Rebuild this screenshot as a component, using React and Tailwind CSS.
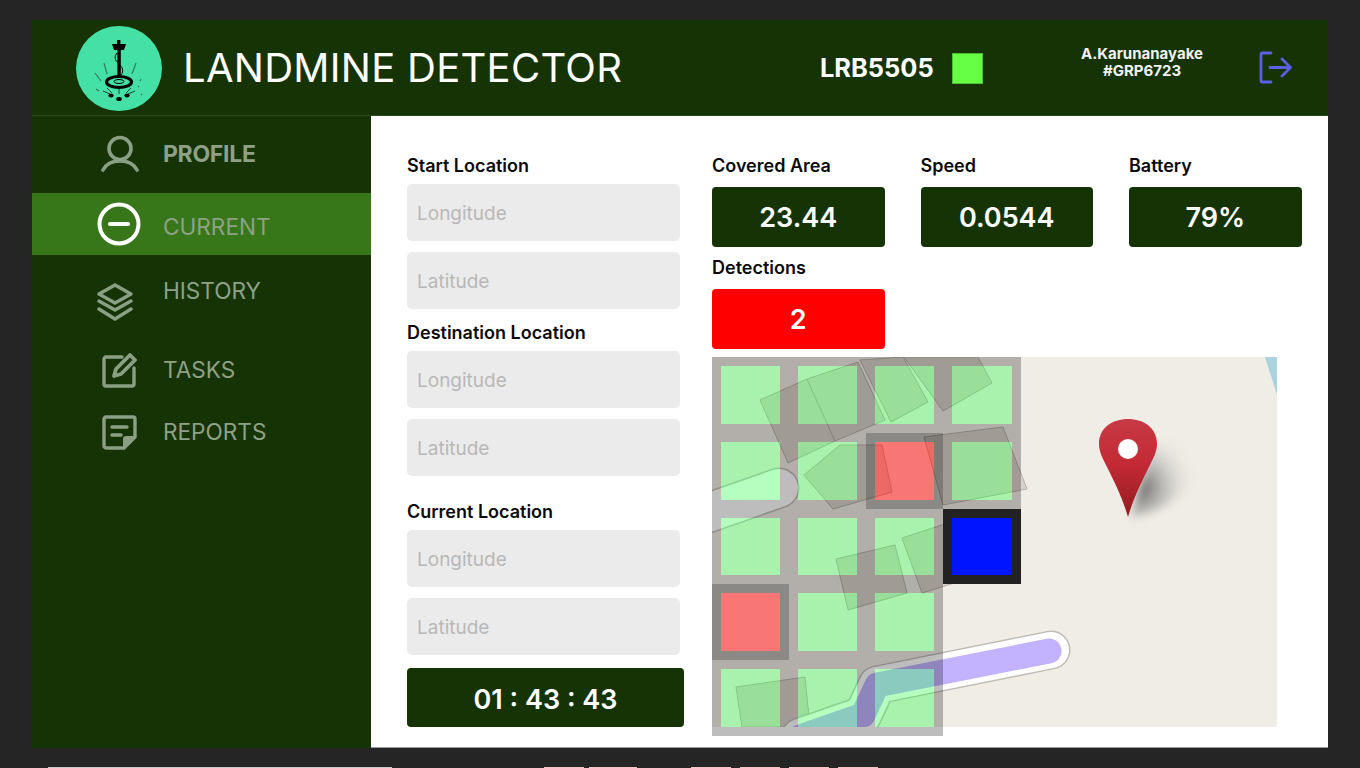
const font = { fontFamily: "Inter, 'Liberation Sans', sans-serif" };

function Logo() {
  return (
    <div className="w-[86px] h-[85px] rounded-full bg-[#44e0a6] shrink-0 mt-[1px]">
      <svg viewBox="0 0 86 85" className="w-full h-full">
        <path d="M36 18h5v-4h3.4v4H50l-2 6h-3.2v28h-3.4V24H38z" fill="#000" />
        <path d="M41 27c-4 5-1 8 3 12 3 3 4 8 0 11" fill="none" stroke="#000" strokeWidth="1" />
        <ellipse cx="43" cy="56" rx="12.5" ry="5.5" fill="none" stroke="#000" strokeWidth="3.2" />
        <ellipse cx="43" cy="55.5" rx="5" ry="2" fill="none" stroke="#000" strokeWidth="1" />
        <path d="M28 37l3 11M19 47l6 8M20 63l3 2M60 37l-4 11M65 53l-1 2M63 60l-1 1M66 68l-1 1" stroke="#2a5a46" strokeWidth="1.2" opacity=".75" />
        <path d="M27 65l7 3M31 62l5 5M55 62l-5 5M59 65l-7 3M43 63v5" stroke="#111" strokeWidth="1" opacity=".75" />
        <ellipse cx="35" cy="69.5" rx="2.6" ry="2" fill="#000" />
        <ellipse cx="51" cy="69.5" rx="2.6" ry="2" fill="#000" />
        <ellipse cx="43" cy="73" rx="2.8" ry="2" fill="#000" />
      </svg>
    </div>
  );
}

function NavIcon({ name }) {
  const common = { fill: "none", stroke: "#8b9f85", strokeWidth: 3.4, strokeLinecap: "round", strokeLinejoin: "round" };
  if (name === "profile")
    return (
      <svg width="38" height="38" viewBox="0 0 38 38" {...common} strokeWidth="3.6">
        <circle cx="19" cy="13.5" r="11" />
        <path d="M2 35c3-6 9-9 17-9s14 3 17 9" />
      </svg>
    );
  if (name === "current")
    return (
      <svg width="44" height="44" viewBox="0 0 44 44" fill="none" stroke="#fff" strokeLinecap="round">
        <circle cx="22" cy="22" r="19.5" strokeWidth="4" />
        <path d="M13 22h18" strokeWidth="4" />
      </svg>
    );
  if (name === "history")
    return (
      <svg width="36" height="38" viewBox="0 0 36 38" {...common}>
        <path d="M18 2L34 11 18 20 2 11z" />
        <path d="M2 18l16 9 16-9" />
        <path d="M2 26l16 10 16-10" />
      </svg>
    );
  if (name === "tasks")
    return (
      <svg width="35" height="35" viewBox="0 0 35 35" {...common}>
        <path d="M20 4H4a2 2 0 0 0-2 2v25a2 2 0 0 0 2 2h26a2 2 0 0 0 2-2V15" />
        <path d="M28 2l5 5-14 14-7 2 2-7z" strokeWidth="3.8" />
      </svg>
    );
  return (
    <svg width="35" height="35" viewBox="0 0 35 35" {...common}>
      <path d="M22 33H4a2 2 0 0 1-2-2V4a2 2 0 0 1 2-2h27a2 2 0 0 1 2 2v18z" />
      <path d="M33 22l-11 11v-9a2 2 0 0 1 2-2z" fill="#8b9f85" strokeWidth="2" />
      <path d="M10 12h15M10 20h9" />
    </svg>
  );
}

function NavRow({ icon, label, className, iconClass, textClass }) {
  return (
    <div className={"flex " + className}>
      <div className={"w-[131px] flex shrink-0 " + iconClass}>
        <NavIcon name={icon} />
      </div>
      <span className={"leading-[30px] text-[#8ea187] " + textClass}>{label}</span>
    </div>
  );
}

function Sidebar() {
  return (
    <aside className="w-[339px] shrink-0 bg-[#153304] flex flex-col">
      <NavRow icon="profile" label="PROFILE" className="h-[77px] items-start pt-[19px]" iconClass="pl-[69px]" textClass="text-[23px] font-bold tracking-[-0.3px] pt-[4px]" />
      <NavRow icon="current" label="CURRENT" className="h-[62px] items-center bg-[#38761a]" iconClass="pl-[65px]" textClass="text-[22.6px] pt-[6px]" />
      <NavRow icon="history" label="HISTORY" className="h-[90px] items-start pt-[21px]" iconClass="pl-[65px] pt-[7px]" textClass="text-[22.6px]" />
      <NavRow icon="tasks" label="TASKS" className="h-[62px] items-start pt-[8px]" iconClass="pl-[70px]" textClass="text-[22.6px] pt-[2px]" />
      <NavRow icon="reports" label="REPORTS" className="h-[50px] items-start pt-[8px]" iconClass="pl-[70px]" textClass="text-[22.6px] pt-[2px]" />
    </aside>
  );
}

function Input({ text, className = "" }) {
  return (
    <div className={"w-[273px] h-[57px] rounded-[5px] bg-[#ebebeb] flex items-center pl-[10px] pt-[4px] text-[19px] text-[#b8b8b8] " + className}>
      {text}
    </div>
  );
}

function Label({ children, className = "" }) {
  return <div className={"h-[22px] text-[18px] leading-[22px] pt-[1px] font-semibold text-[#0b0b0b] " + className}>{children}</div>;
}

function Stat({ label, value, red }) {
  return (
    <div className="w-[172.5px]">
      <Label>{label}</Label>
      <div className={"mt-[11px] h-[60px] rounded-[4px] flex items-center justify-center pt-[3px] text-[27px] font-semibold text-white " + (red ? "bg-[#ff0000]" : "bg-[#153304]")}>
        {value}
      </div>
    </div>
  );
}

function MapArt() {
  return (
    <svg viewBox="0 0 565 370" className="w-full h-full block">
      <defs>
        <linearGradient id="pinG" x1="0" y1="0" x2="0" y2="1">
          <stop offset="0" stopColor="#c73a44" />
          <stop offset=".45" stopColor="#c42a35" />
          <stop offset="1" stopColor="#921a20" />
        </linearGradient>
        <radialGradient id="shadowG" gradientUnits="userSpaceOnUse" cx="425" cy="130" r="62">
          <stop offset="0" stopColor="#444" stopOpacity=".9" />
          <stop offset=".5" stopColor="#999" stopOpacity=".45" />
          <stop offset="1" stopColor="#f0ede6" stopOpacity="0" />
        </radialGradient>
      </defs>
      <polygon points="553,0 565,0 565,38" fill="#abd3df" />
      <g fill="#d9d2ca" stroke="#b8afa7" strokeWidth="1">
        <polygon points="48,43 95,22 123,84 76,106" />
        <polygon points="95,22 146,5 173,63 123,84" />
        <polygon points="148,3 191,0 216,45 179,65" />
        <polygon points="192,0 266,0 280,26 231,54" />
        <polygon points="92,118 128,88 170,88 180,135 121,152" />
        <polygon points="212,80 291,70 315,132 231,148" />
        <polygon points="124,202 183,188 195,236 136,253" />
        <polygon points="190,181 245,163 262,220 210,236" />
        <polygon points="24,330 93,320 98,370 30,370" />
      </g>
      <path d="M-10 158L67 131" stroke="#c0bcb5" strokeWidth="41" strokeLinecap="round" fill="none" />
      <path d="M-10 158L67 131" stroke="#fff" strokeWidth="38" strokeLinecap="round" fill="none" />
      <g fill="none" strokeLinecap="round" strokeLinejoin="round">
        <path d="M339 293L165 328 151 358 88 380" stroke="#c0bcb5" strokeWidth="39" />
        <path d="M339 293L165 328 151 358 88 380" stroke="#fff" strokeWidth="36" />
        <path d="M337 294L165 328 151 358 88 380" stroke="#c3b3ff" strokeWidth="25" />
      </g>
      <path d="M418 160C448 157 484 135 487 105 488 84 462 78 440 90Z" fill="url(#shadowG)" style={{ filter: "blur(5px)" }} />
      <path d="M416 160c-5-18-14-36-22-52-4-8-7-14-7-21 0-16 13-25 29-25s29 9 29 25c0 7-3 13-7 21-8 16-17 34-22 52z" fill="url(#pinG)" />
      <circle cx="416" cy="92" r="10" fill="#fff" />
    </svg>
  );
}

const cells = [
  "g","g","g","g",
  "g","g","r","g",
  "g","g","g","b",
  "r","g","g","",
  "g","g","g","",
];

function Cell({ kind }) {
  if (!kind) return <div />;
  if (kind === "b")
    return <div className="border-[9px] border-[#222222] bg-[#0015ff] bg-clip-padding" />;
  if (kind === "r")
    return <div className="border-[9px] border-black/[.42] bg-[#ff0000]/50 bg-clip-padding" />;
  return <div className="border-[9px] border-black/[.26] bg-[#07ff2b]/30 bg-clip-padding" />;
}

function MapPanel() {
  return (
    <div className="relative w-[565px] h-[370px] bg-[#f0ede6]">
      <MapArt />
      <div className="absolute left-0 top-0 w-[309px] h-[379px] grid grid-cols-[77px_77px_77px_78px] grid-rows-5">
        {cells.map((c, i) => (
          <Cell key={i} kind={c} />
        ))}
      </div>
    </div>
  );
}

function Main() {
  return (
    <main className="flex-1 bg-white flex border-b border-[#9a9a9a]">
      <div className="w-[278px] ml-[36px] shrink-0 pt-[38px]">
        <Label>Start Location</Label>
        <Input text="Longitude" className="mt-[8px]" />
        <Input text="Latitude" className="mt-[11px]" />
        <Label className="mt-[12px]">Destination Location</Label>
        <Input text="Longitude" className="mt-[8px]" />
        <Input text="Latitude" className="mt-[11px]" />
        <Label className="mt-[24px]">Current Location</Label>
        <Input text="Longitude" className="mt-[8px]" />
        <Input text="Latitude" className="mt-[11px]" />
        <div className="mt-[13px] w-[277px] h-[59px] rounded-[4px] bg-[#153304] text-white text-[27px] font-semibold pt-[5px] flex items-center justify-center">
          01 : 43 : 43
        </div>
      </div>
      <div className="ml-[27px] pt-[38px]">
        <div className="flex gap-[36px]">
          <Stat label="Covered Area" value="23.44" />
          <Stat label="Speed" value="0.0544" />
          <Stat label="Battery" value="79%" />
        </div>
        <div className="mt-[9px]">
          <Stat label="Detections" value="2" red />
        </div>
        <div className="mt-[8px]">
          <MapPanel />
        </div>
      </div>
    </main>
  );
}

function Header() {
  return (
    <header className="h-[96px] shrink-0 bg-[#153304] border-b border-[#28491a] flex items-center pl-[44px]">
      <Logo />
      <div className="ml-[21px] w-[637px] text-[40px] font-normal text-white leading-none tracking-[0.28px]">LANDMINE DETECTOR</div>
      <div className="text-[25.4px] font-bold text-white leading-none w-[132px] mt-[1px]">LRB5505</div>
      <div className="w-[31px] h-[31px] mt-[1px] bg-[#66ff44] border border-[#4ec034]" />
      <div className="ml-[97px] w-[124px] text-center text-[15px] font-bold leading-[17px] text-[#f2f2f2] -mt-[11px]">
        <span className="whitespace-nowrap">A.Karunanayake</span>
        <br />
        #GRP6723
      </div>
      <svg className="ml-[55px]" width="33" height="33" viewBox="0 0 33 33" fill="none" stroke="#5a5fe6" strokeWidth="2.8" strokeLinecap="round" strokeLinejoin="round">
        <path d="M12 2H3a1 1 0 0 0-1 1v27a1 1 0 0 0 1 1h9" />
        <path d="M11 16.5h20M23 8l8.5 8.5L23 25" />
      </svg>
    </header>
  );
}

const strip = [
  ["w-[344px] ml-[48px]", "bg-[#c8c8c8]"],
  ["w-[40px] ml-[152px]", "bg-[#f3c3c3]"],
  ["w-[48px] ml-[5px]", "bg-[#f3c3c3]"],
  ["w-[40px] ml-[54px]", "bg-[#f3c3c3]"],
  ["w-[40px] ml-[9px]", "bg-[#f3c3c3]"],
  ["w-[40px] ml-[9px]", "bg-[#f3c3c3]"],
  ["w-[40px] ml-[9px]", "bg-[#f3c3c3]"],
];

export default function App() {
  return (
    <div className="w-[1360px] h-[768px] overflow-hidden bg-[#252525] flex flex-col" style={font}>
      <div className="ml-[32px] mt-[20px] w-[1296px] h-[728px] flex flex-col shrink-0">
        <Header />
        <div className="flex flex-1 min-h-0">
          <Sidebar />
          <Main />
        </div>
      </div>
      <div className="mt-[19px] h-[1px] flex">
        {strip.map(([a, b], i) => (
          <div key={i} className={a + " " + b} />
        ))}
      </div>
    </div>
  );
}
